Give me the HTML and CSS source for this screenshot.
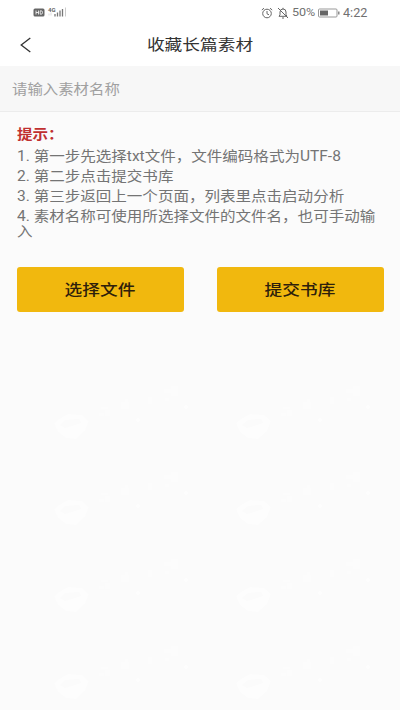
FILE: index.html
```html
<!DOCTYPE html>
<html lang="zh-CN">
<head>
<meta charset="utf-8">
<title>收藏长篇素材</title>
<link rel="stylesheet" href="styles.css">
</head>
<body>
<div class="status">
  <svg class="status-left" width="36" height="14" viewBox="0 0 36 14">
    <rect x="0.5" y="3.5" width="11" height="8" rx="1.5" fill="#666"/>
    <path d="M3 5.5v4M5.5 5.5v4M3 7.5h2.5M7.2 5.8v3.4h1q1.3 0 1.3-1.7t-1.3-1.7z" fill="none" stroke="#fff" stroke-width=".8"/>
    <text class="net" x="15" y="6.8">4G</text>
    <path d="M16 8.5v2M18 7.5v3" stroke="#ddd"/>
    <path d="M22 9v2.500M24.500 7.500v4M27 5.500v6M29.500 4v7.500" stroke="#777" stroke-width="1.300"/>
    <path d="M32.500 2.500v9" stroke="#ccc"/>
  </svg>
  <div class="status-right">
    <svg width="12" height="12" viewBox="0 0 12 12" fill="none" stroke="#666">
      <circle cx="6" cy="6.500" r="4.300"/><path d="M.8 3 3 1.200M11.200 3 9 1.200M6 4v2.800l2 1"/>
    </svg>
    <svg class="bell" width="12" height="12" viewBox="0 0 12 12" fill="none" stroke="#666">
      <path d="M2 9.300h8L9 7.800V5Q9 2 6 2T3 5v2.800zM5 11h2M6 2V.8M1 1l10 10"/>
    </svg>
    <span class="percent">50%</span>
    <svg class="battery" width="22" height="10" viewBox="0 0 22 10">
      <rect x=".5" y="1" width="18.500" height="8" rx="1" fill="#fff" stroke="#999"/>
      <path d="M2 2.500h8v5H2z" fill="#666"/><path d="M20.800 3.500v3" stroke="#777" stroke-width="1.300"/>
    </svg>
    <span class="clock">4:22</span>
  </div>
</div>
<header class="header">
  <svg class="back" width="12" height="16" viewBox="0 0 12 16"><path d="M10.300 1 1.200 8l9.100 7" fill="none" stroke="#333" stroke-width="1.300"/></svg>
  <h1 class="title"><span class="wide">收藏长篇素材</span></h1>
</header>
<div class="field"><span class="wide wide-left">请输入素材名称</span></div>
<main class="main">
  <div class="tips">
    <p class="tips-title">提示：</p>
    <p>1. 第一步先选择txt文件，文件编码格式为UTF-8</p>
    <p>2. 第二步点击提交书库</p>
    <p>3. 第三步返回上一个页面，列表里点击启动分析</p>
    <p>4. 素材名称可使用所选择文件的文件名，也可手动输<br>入</p>
  </div>
  <div class="actions">
    <button class="btn"><span class="wide">选择文件</span></button>
    <button class="btn"><span class="wide">提交书库</span></button>
  </div>
  <svg class="marks" width="400" height="330" viewBox="0 380 400 330">
    <defs>
      <g id="mark">
        <path fill-rule="evenodd" d="M0 10 5 6 14 1 28 2 35 8 31 18 22 26 12 25 4 19zM6 12 11 15 27 10 25 6 12 7z"/>
        <path d="M45 0h5v3h-5zM51-3h5v6h-5zM47-6h7v2h-7zM67-11h8v7h-8zM71-14h3v3h-3zM94-16h4v7h-4zM110-24h7v4h-7zM117-27h7v10h-7zM111-15h4v3h-4z" opacity=".7"/>
        <circle cx="84" cy="7" r="2"/><circle cx="132" cy="-6" r="2"/>
      </g>
    </defs>
    <use href="#mark" x="54" y="413"/><use href="#mark" x="236" y="413"/>
    <use href="#mark" x="54" y="499"/><use href="#mark" x="236" y="499"/>
    <use href="#mark" x="54" y="586"/><use href="#mark" x="236" y="586"/>
    <use href="#mark" x="54" y="673"/><use href="#mark" x="236" y="673"/>
  </svg>
</main>
</body>
</html>
```
FILE: styles.css
```css
* { box-sizing: border-box; }
body {
  margin: 0;
  width: 400px;
  height: 710px;
  overflow: hidden;
  display: flex;
  flex-direction: column;
  background: #fff;
  color: #747474;
  font-family: Roboto, "Noto Sans CJK SC", sans-serif;
}
p, h1 { margin: 0; }
.status {
  height: 25px;
  display: flex;
  justify-content: space-between;
  padding: 0 32px 0 33px;
}
.status-left { margin-top: 5px; }
.net { font-size: 6px; font-weight: 700; fill: #666; }
.status-right {
  display: flex;
  align-items: center;
  font-size: 11px;
  color: #707070;
}
.bell { margin: 0 3px 0 4px; }
.percent, .clock {
  display: inline-block;
  transform: scaleX(1.14);
  transform-origin: left;
}
.percent { width: 26px; }
.clock { width: 25px; font-size: 12px; transform: scaleX(1.05); }
.battery { margin-right: 3px; }
.header {
  height: 41px;
  display: grid;
  grid-template-columns: 40px 1fr 40px;
  align-items: center;
  padding-bottom: 1px;
}
.back { margin-left: 20px; }
.title {
  padding-bottom: 3px;
  text-align: center;
  font-size: 15px;
  font-weight: 400;
  color: #333;
}
.wide { display: inline-block; transform: scaleX(1.18); }
.wide-left { transform: scaleX(1.1); transform-origin: left; }
.field {
  height: 46px;
  padding: 0 12px 2px;
  display: flex;
  align-items: center;
  background: #f7f7f7;
  border-bottom: 1px solid #ececec;
  font-size: 14px;
  color: #a0a0a0;
}
.main {
  flex: 1;
  background: #fbfbfb;
}
.tips {
  height: 155px;
  padding: 15px 0 0 17px;
  width: 364px;
  font-size: 14px;
  line-height: 15px;
  white-space: nowrap;
  transform: scaleX(1.109);
  transform-origin: 17px 0;
}
.tips p { margin-bottom: 5px; }
.tips .tips-title { color: #c03030; font-weight: 700; margin-bottom: 7px; }
.actions {
  display: grid;
  grid-template-columns: 167px 167px;
  gap: 33px;
  padding-left: 16.500px;
}
.btn {
  height: 45px;
  padding: 0 0 2px;
  border: 0;
  border-radius: 3px;
  background: #f1b80e;
  color: #2e200b;
  font: 500 15px Roboto, "Noto Sans CJK SC", sans-serif;
}
.marks { display: block; margin-top: 68px; fill: #fff; opacity: .65; }
```
